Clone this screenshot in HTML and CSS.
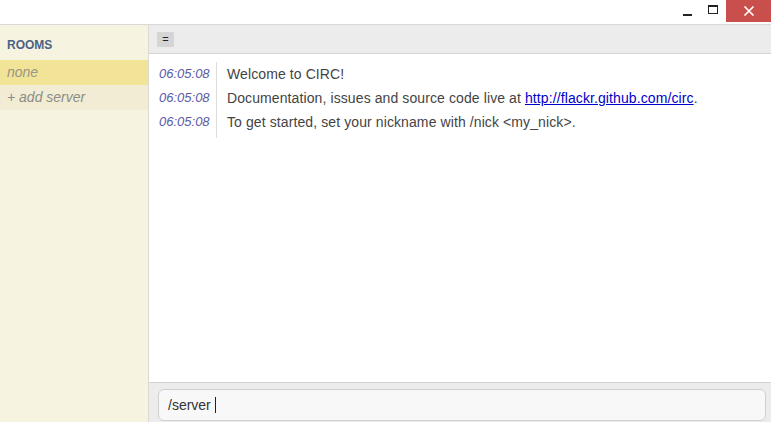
FILE: index.html
```html
<!DOCTYPE html>
<html>
<head>
<meta charset="utf-8">
<link rel="stylesheet" href="styles.css">
</head>
<body>
<div class="app">
  <div class="titlebar">
    <div class="winbtn min"><span class="min-bar"></span></div>
    <div class="winbtn max"><span class="max-box"></span></div>
    <div class="winbtn close">
      <svg width="12" height="10" viewBox="0 0 12 10"><path d="M1.5 0.5 L10.5 9.5 M10.5 0.5 L1.5 9.5" stroke="#fff" stroke-width="1.6" fill="none"/></svg>
    </div>
  </div>
  <div class="body">
    <aside class="sidebar">
      <div class="rooms-title">ROOMS</div>
      <div class="room active">none</div>
      <div class="room add">+ add server</div>
    </aside>
    <main class="main">
      <div class="topbar"><span class="menu-btn">=</span></div>
      <div class="messages">
        <div class="msg"><span class="ts">06:05:08</span><span class="text">Welcome to CIRC!</span></div>
        <div class="msg"><span class="ts">06:05:08</span><span class="text">Documentation, issues and source code live at <a href="#">http://flackr.github.com/circ</a>.</span></div>
        <div class="msg last"><span class="ts">06:05:08</span><span class="text">To get started, set your nickname with /nick &lt;my_nick&gt;.</span></div>
      </div>
      <div class="inputbar">
        <div class="input">/server <span class="caret"></span></div>
      </div>
    </main>
  </div>
</div>
</body>
</html>
```
FILE: styles.css
```css
html, body {
  margin: 0;
  padding: 0;
  width: 771px;
  height: 422px;
  overflow: hidden;
  font-family: "Liberation Sans", Arial, sans-serif;
}
.app {
  display: flex;
  flex-direction: column;
  height: 422px;
}
.titlebar {
  height: 24px;
  background: #fff;
  display: flex;
  justify-content: flex-end;
  align-items: flex-start;
  border-bottom: 1px solid #d8d8d8;
  flex: none;
}
.winbtn {
  height: 22px;
  display: flex;
  align-items: center;
  justify-content: center;
}
.min { width: 26px; }
.min-bar {
  display: block;
  width: 9px;
  height: 2px;
  background: #222;
  margin-top: 7px;
}
.max { width: 26px; }
.max-box {
  display: block;
  width: 8px;
  height: 6px;
  border: 1px solid #222;
  border-top-width: 2px;
  margin-top: -4px;
}
.close {
  width: 45px;
  background: #c94f4c;
}
.body {
  flex: 1;
  display: flex;
  min-height: 0;
}
.sidebar {
  width: 148px;
  flex: none;
  background: #f6f3e1;
  border-right: 1px solid #dcdad0;
  padding-top: 12px;
  box-sizing: content-box;
}
.rooms-title {
  font-size: 12px;
  font-weight: bold;
  color: #4b6286;
  padding-left: 7px;
  height: 23px;
  line-height: 16px;
}
.room {
  height: 25px;
  line-height: 24px;
  padding-left: 7px;
  font-size: 14px;
  font-style: italic;
  color: #8a8a80;
}
.room.active {
  background: #f1e497;
  color: #999686;
}
.room.add {
  background: #f1ecd3;
  color: #8c8c86;
}
.main {
  flex: 1;
  display: flex;
  flex-direction: column;
  min-width: 0;
}
.topbar {
  height: 28px;
  background: #ececec;
  border-bottom: 1px solid #d6d6d6;
  display: flex;
  align-items: flex-start;
  padding-left: 8px;
  flex: none;
}
.menu-btn {
  margin-top: 7px;
  width: 17px;
  height: 15px;
  background: #d5d5d5;
  font-size: 11px;
  line-height: 15px;
  text-align: center;
  color: #222;
  border-radius: 1px;
}
.messages {
  flex: 1;
  background: #fff;
  padding-top: 8px;
}
.msg {
  display: flex;
  align-items: flex-start;
  font-size: 14px;
}
.ts {
  width: 68px;
  flex: none;
  box-sizing: border-box;
  padding-left: 10px;
  font-size: 13px;
  font-style: italic;
  color: #5a5aa8;
  border-right: 1px solid #dedede;
  height: 24px;
  line-height: 24px;
}
.msg.last .ts { height: 28px; }
.text {
  padding-left: 10px;
  color: #444;
  line-height: 24px;
  letter-spacing: 0.1px;
}
.text a {
  color: #0000cc;
  text-decoration: underline;
}
.inputbar {
  height: 40px;
  background: #ececec;
  border-top: 1px solid #d4d4d4;
  padding: 6px 5px 0 9px;
  box-sizing: border-box;
  flex: none;
}
.input {
  height: 32px;
  background: #f8f8f8;
  border: 1px solid #cfcfcf;
  border-radius: 6px;
  box-sizing: border-box;
  padding-left: 9px;
  font-size: 14px;
  line-height: 30px;
  color: #333;
  display: flex;
  align-items: center;
}
.caret {
  display: inline-block;
  width: 1px;
  height: 16px;
  background: #222;
  margin-left: 4px;
}
```
